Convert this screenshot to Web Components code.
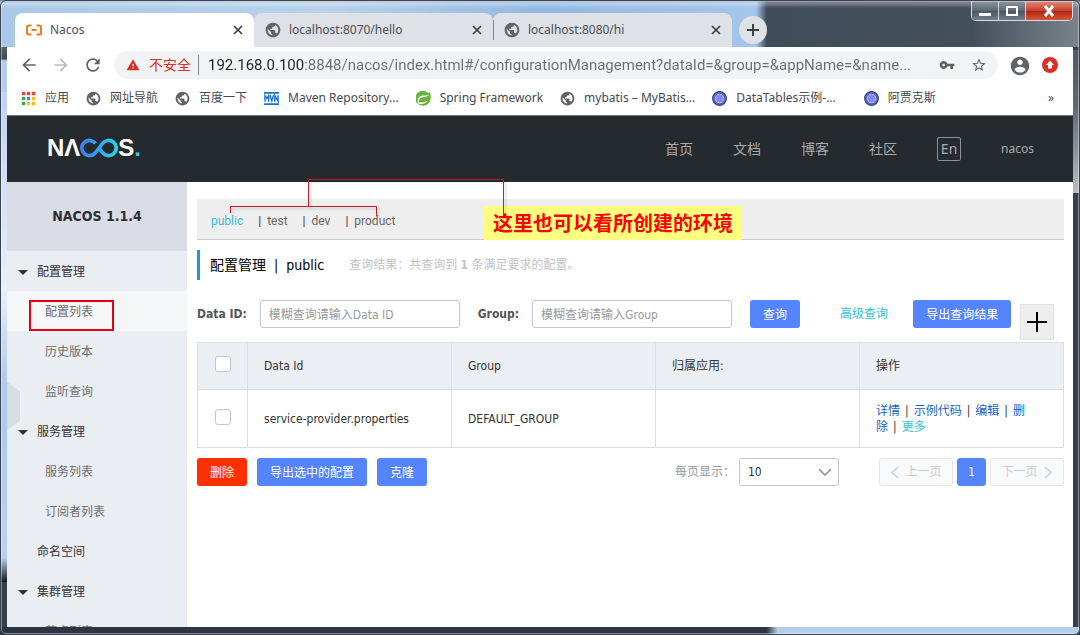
<!DOCTYPE html>
<html lang="zh-CN">
<head>
<meta charset="utf-8">
<title>Nacos</title>
<style>
  html, body { margin: 0; height: 100%; }
  body { font: 12px/16px "Noto Sans", "Noto Sans CJK SC", sans-serif; color: #333; background: #2e3744; overflow: hidden; }
</style>
</head>
<body>
<browser-window>
  <tab-strip slot="tabs">
    <browser-tab icon="alibaba" active>Nacos</browser-tab>
    <browser-tab icon="globe">localhost:8070/hello</browser-tab>
    <browser-tab icon="globe" divided>localhost:8080/hi</browser-tab>
  </tab-strip>
  <address-bar slot="toolbar"></address-bar>
  <bookmark-bar slot="bookmarks">
    <book-mark icon="apps">应用</book-mark>
    <book-mark icon="globe">网址导航</book-mark>
    <book-mark icon="globe">百度一下</book-mark>
    <book-mark icon="mvn">Maven Repository...</book-mark>
    <book-mark icon="spring">Spring Framework</book-mark>
    <book-mark icon="globe">mybatis – MyBatis...</book-mark>
    <book-mark icon="orb" wide>DataTables示例-...</book-mark>
    <book-mark icon="orb">阿贾克斯</book-mark>
  </bookmark-bar>
  <nacos-app></nacos-app>
</browser-window>

<script>
const define = (name, css, html) => {
  const template = document.createElement('template');
  template.innerHTML = `<style>*,:host{box-sizing:border-box}a{text-decoration:none;color:inherit}button,input,select{font:inherit;margin:0}${css}</style>`;
  customElements.define(name, class extends HTMLElement {
    constructor() {
      super();
      this.attachShadow({ mode: 'open' });
    }
    connectedCallback() {
      if (this.shadowRoot.childNodes.length) return;
      this.shadowRoot.append(template.content.cloneNode(true));
      const body = document.createElement('template');
      body.innerHTML = typeof html === 'function' ? html(this) : html;
      this.shadowRoot.append(body.content);
    }
  });
};

const material = d => `<svg viewBox="0 0 24 24"><path fill="currentColor" d="${d}"/></svg>`;
const dots = ['#ea4335', '#ea4335', '#ea4335', '#34a853', '#4285f4', '#fbbc05', '#34a853', '#fbbc05', '#fbbc05']
  .map((c, i) => `<rect x="${(i % 3) * 6 + 1}" y="${Math.floor(i / 3) * 6 + 1}" width="4" height="4" fill="${c}"/>`).join('');
const ICONS = {
  globe: material('M12 1C5.9 1 1 5.9 1 12s4.900 11 11 11 11-4.900 11-11S18.100 1 12 1zm-1 18.930c-3.950-.490-7-3.850-7-7.930 0-.620.080-1.210.210-1.790L9 15v1c0 1.100.900 2 2 2v1.930zm6.900-2.540c-.260-.810-1-1.390-1.900-1.390h-1v-3c0-.550-.450-1-1-1H8v-2h2c.550 0 1-.450 1-1V7h2c1.100 0 2-.900 2-2v-.410c2.930 1.190 5 4.060 5 7.410 0 2.080-.800 3.970-2.100 5.390z'),
  back: material('M20 11H7.83l5.59-5.59L12 4l-8 8 8 8 1.41-1.41L7.83 13H20v-2z'),
  forward: material('M12 4l-1.41 1.41L16.17 11H4v2h12.17l-5.58 5.590L12 20l8-8z'),
  reload: material('M17.65 6.35C16.2 4.9 14.21 4 12 4c-4.42 0-7.99 3.58-7.99 8s3.57 8 7.99 8c3.73 0 6.84-2.55 7.73-6h-2.08c-.82 2.33-3.04 4-5.65 4-3.31 0-6-2.69-6-6s2.69-6 6-6c1.66 0 3.14.69 4.22 1.78L13 11h7V4l-2.35 2.35z'),
  warning: material('M1 21h22L12 2 1 21zm12-3h-2v-2h2v2zm0-4h-2v-4h2v4z'),
  key: material('M12.65 10C11.83 7.67 9.61 6 7 6c-3.31 0-6 2.69-6 6s2.69 6 6 6c2.61 0 4.83-1.67 5.65-4H17v4h4v-4h2v-4H12.65zM7 14c-1.1 0-2-.9-2-2s.9-2 2-2 2 .9 2 2-.9 2-2 2z'),
  star: material('M22 9.24l-7.19-.62L12 2 9.19 8.63 2 9.24l5.46 4.73L5.82 21 12 17.27 18.18 21l-1.63-7.03L22 9.24zM12 15.4l-3.76 2.27 1-4.28-3.32-2.88 4.38-.38L12 6.1l1.71 4.04 4.38.38-3.32 2.88 1 4.28L12 15.4z'),
  account: material('M12 2C6.48 2 2 6.48 2 12s4.48 10 10 10 10-4.48 10-10S17.52 2 12 2zm0 3c1.66 0 3 1.34 3 3s-1.34 3-3 3-3-1.34-3-3 1.34-3 3-3zm0 14.2c-2.5 0-4.71-1.28-6-3.22.03-1.99 4-3.08 6-3.08 1.99 0 5.97 1.09 6 3.08-1.29 1.94-3.5 3.22-6 3.22z'),
  update: '<svg viewBox="0 0 16 16"><circle cx="8" cy="8" r="8" fill="#d93025"/><path fill="#fff" d="M8 3.500l4 4.500H10v3.500H6V8H4z"/></svg>',
  alibaba: '<svg viewBox="0 0 16 16"><path d="M5.500 3.500H2.800Q1 3.500 1 5.300v5.400q0 1.800 1.800 1.800h2.700M10.500 3.500h2.700q1.800 0 1.800 1.800v5.400q0 1.800-1.800 1.800h-2.700M5.500 8h5" fill="none" stroke="#f07c1f" stroke-width="2"/></svg>',
  apps: `<svg viewBox="0 0 18 18">${dots}</svg>`,
  mvn: '<svg viewBox="0 0 16 16"><path fill="#1b73d0" d="M0 1h16v2H0zM0 13h16v2H0z"/><path d="M1 11.500V5l2 3 2-3v6.500M6.500 4.500l1.800 6 1.800-6M11.500 11.500V5l3.500 6V4.500" fill="none" stroke="#1b73d0" stroke-width="1.500"/></svg>',
  spring: '<svg viewBox="0 0 16 16"><path fill="#68b33e" d="M14.500.7c1.700 4 1.900 8.800-.8 12A8 8 0 1 1 13 2.200q1-.7 1.500-1.500z"/><path fill="#fff" d="M14 3.500C12.700 6.500 9.500 6 6.500 6.800 3.500 7.700 2.600 9.600 3 12c4.600.6 7.800-.2 9.800-2.400-1.500 3.600-5 4.900-9.500 4.200l-.5.200C.8 10.500 2 6.400 5.500 5.200 8.800 4.200 12 5.500 14 3.500z"/></svg>',
  orb: '<svg viewBox="0 0 16 16"><circle cx="8" cy="8" r="7.300" fill="#5d66c6" stroke="#343a78" stroke-width="1.200"/><circle cx="8" cy="8" r="4.500" fill="#7f8aea" stroke="#b6bdf5"/></svg>',
  close: '<svg viewBox="0 0 10 10"><path d="M1 1l8 8M9 1L1 9" stroke="#3c4043" stroke-width="1.700"/></svg>',
  plus: '<svg viewBox="0 0 20 20"><path d="M10 0v20M0 10h20" stroke="currentColor" stroke-width="2"/></svg>',
  add: '<svg viewBox="0 0 12 12"><path d="M6 0v12M0 6h12" stroke="currentColor" stroke-width="2"/></svg>',
  down: '<svg viewBox="0 0 12 12"><path d="M0 3l6 6 6-6" fill="none" stroke="currentColor" stroke-width="1.300"/></svg>',
  left: '<svg viewBox="0 0 12 12"><path d="M9 0L2 6l7 6" fill="none" stroke="currentColor" stroke-width="1.400"/></svg>',
  right: '<svg viewBox="0 0 12 12"><path d="M3 0l7 6-7 6" fill="none" stroke="currentColor" stroke-width="1.400"/></svg>',
  caret: '<svg viewBox="0 0 10 10"><path d="M0 3h10L5 8z" fill="currentColor"/></svg>'
};
define('ui-icon', `:host{display:inline-flex;flex:none;width:16px;height:16px}svg{width:100%;height:100%}`, el => ICONS[el.getAttribute('name')]);

/* ---------- browser frame ---------- */
define('browser-window', `
  :host{display:flex;flex-direction:column;height:100vh;padding:0 7px 8px;border-radius:6px;position:relative;
    background:
      linear-gradient(#8fb3da,#b9d6f3 20%,#5d6773 50%,#3e4854 64%,#b3cdec 66%) left top/7px 92px no-repeat,
      linear-gradient(#bcd4f2,#e9effb 40%,#a9cbef 60%,#b5d3f5 95%,#15181c) left 92px/7px 490px no-repeat,
      linear-gradient(#4e5a66,#5f6974 40%,#b9bdc2) right 50px/7px 143px no-repeat,
      linear-gradient(90deg,#2d3542 71%,#b5cfea 72%) left bottom/100% 8px no-repeat,
      #36404c}
  :host::after{content:"";position:absolute;inset:0;border:1px solid #3a4150;border-radius:6px;box-shadow:inset 0 0 0 1px #ffffff66;pointer-events:none}
  .strip{margin:0 -7px;padding:13px 7px 0 15px;
    background:linear-gradient(#39415080 0,#ffffff55 3px,transparent 8px),
      linear-gradient(90deg,#a9c8e8,#b9d1ea 30%,#93b9e2 50%,#a5c6e9 70%,#3f4c59 71%,#43505c 90%,#7a838c)}
  .page{flex:1;min-height:0;display:flex;flex-direction:column;border-top:1px solid #73777b;background:#fff;overflow:hidden}
  ::slotted(nacos-app){flex:1;min-height:0}
  .win{position:absolute;top:1px;right:7px;display:flex;border:1px solid #d5dade;border-top:0;border-radius:0 0 5px 5px;overflow:hidden}
  .win button{width:27px;height:19px;border:0;border-right:1px solid #cfd4d8;padding:0;background:linear-gradient(#8e979f,#5d6770 50%,#4b555f 51%,#727c86);display:grid;place-items:center}
  .win button:last-child{width:46px;border:0;background:linear-gradient(#dd9181,#c7402a 50%,#b3230f 51%,#d0583a)}
  .win svg{width:14px;height:12px}
`, `
  <div class="strip"><slot name="tabs"></slot></div>
  <slot name="toolbar"></slot>
  <slot name="bookmarks"></slot>
  <div class="page"><slot></slot></div>
  <div class="win">
    <button aria-label="minimize"><svg viewBox="0 0 14 12"><path d="M1 8h12v3H1z" fill="#fff"/></svg></button>
    <button aria-label="maximize"><svg viewBox="0 0 14 12"><path d="M2 2h10v8H2z" fill="none" stroke="#fff" stroke-width="2"/></svg></button>
    <button aria-label="close"><svg viewBox="0 0 14 12"><path d="M3 1l8 10M11 1l-8 10" stroke="#fff" stroke-width="3"/></svg></button>
  </div>`);

define('tab-strip', `
  :host{display:flex;align-items:center;height:34px}
  ::slotted(browser-tab){width:239px}
  button{width:28px;height:28px;margin-left:7px;padding:0;border:0;border-radius:50%;background:#dee1e6;color:#3c4043;display:grid;place-items:center}
  ui-icon{width:12px;height:12px}
`, `<slot></slot><button aria-label="new tab"><ui-icon name="add"></ui-icon></button>`);

define('browser-tab', `
  :host{display:flex;align-items:center;gap:8px;height:34px;padding:0 11px;background:#dee1e6;color:#4b4f54;border-radius:8px 8px 0 0}
  :host([active]){background:#fff}
  :host([divided]){background:linear-gradient(#85898e,#85898e) left center/1px 20px no-repeat #dee1e6}
  span{flex:1;white-space:nowrap}
  button{border:0;background:none;padding:0;width:10px;height:10px;display:grid}
  ui-icon[name=globe]{color:#5f6368}
  ui-icon[name=close]{width:10px;height:10px}
`, el => `<ui-icon name="${el.getAttribute('icon')}"></ui-icon><span><slot></slot></span><button aria-label="close tab"><ui-icon name="close"></ui-icon></button>`);

define('address-bar', `
  :host{display:flex;align-items:center;gap:11px;height:36px;padding:0 13px 0 12px;background:#fff;color:#5f6368}
  button{border:0;background:none;padding:0;width:20px;height:20px;display:grid;place-items:center;color:inherit}
  button.off{color:#b9bcc0}
  .nav ui-icon{width:20px;height:20px}
  .nav{display:flex;gap:12px}
  .box{flex:1;min-width:0;display:flex;align-items:center;height:28px;border-radius:14px;background:#f1f3f4;padding:0 9px 0 12px}
  .warn{color:#d93025;width:14px;height:14px}
  label{margin:0 7px 0 9px;font-size:14px;line-height:20px;color:#d93025;white-space:nowrap}
  input{flex:1;min-width:0;height:20px;border:0;border-left:1px solid #80868b;padding:0 0 0 9px;font:15px/20px Roboto,sans-serif;outline:0;text-overflow:ellipsis;
    background:linear-gradient(90deg,#202124 105px,#6a6e73 105px);-webkit-background-clip:text;background-clip:text;-webkit-text-fill-color:transparent}
  .tail{display:flex;gap:12px;margin-left:4px}
  .acct ui-icon{width:22px;height:22px}
`, `
  <div class="nav">
    <button aria-label="back"><ui-icon name="back"></ui-icon></button>
    <button class="off" aria-label="forward"><ui-icon name="forward"></ui-icon></button>
    <button aria-label="reload"><ui-icon name="reload"></ui-icon></button>
  </div>
  <div class="box">
    <ui-icon class="warn" name="warning"></ui-icon>
    <label for="url">不安全</label>
    <input id="url" value="192.168.0.100:8848/nacos/index.html#/configurationManagement?dataId=&amp;group=&amp;appName=&amp;name...">
    <div class="tail">
      <button aria-label="passwords"><ui-icon name="key"></ui-icon></button>
      <button aria-label="bookmark"><ui-icon name="star"></ui-icon></button>
    </div>
  </div>
  <button class="acct" aria-label="account"><ui-icon name="account"></ui-icon></button>
  <button aria-label="update"><ui-icon name="update"></ui-icon></button>`);

define('bookmark-bar', `
  :host{display:flex;align-items:center;gap:17px;height:32px;padding:0 19px 2px 14px;background:#fff;color:#45494d}
  button{margin-left:auto;border:0;background:none;padding:0;color:inherit}
`, `<slot></slot><button aria-label="more bookmarks">»</button>`);
define('book-mark', `
  :host{display:block;white-space:nowrap}
  :host([wide]){margin-right:11px}
  a{display:flex;align-items:center;gap:9px}
  ui-icon{width:15px;height:15px;color:#5f6368}
`, el => `<a href="#"><ui-icon name="${el.getAttribute('icon')}"></ui-icon><slot></slot></a>`);

/* ---------- Nacos console ---------- */
define('nacos-app', `
  :host{display:flex;flex-direction:column;font-family:"DejaVu Sans Condensed","Noto Sans CJK SC",sans-serif}
  .body{flex:1;min-height:0;display:flex}
  side-menu{width:180px;flex:none}
  main{flex:1;min-width:0;padding:17px 9px 0 10px}
`, `
  <nacos-header></nacos-header>
  <div class="body"><side-menu></side-menu>
    <main>
      <env-bar></env-bar>
      <page-title></page-title>
      <search-form></search-form>
      <config-table></config-table>
      <table-footer></table-footer>
    </main>
  </div>`);

define('nacos-header', `
  :host{display:flex;align-items:center;justify-content:space-between;height:66px;flex:none;padding:0 39px 0 40px;background:#252a2f;color:#a9abad;font-family:"Noto Sans","Noto Sans CJK SC",sans-serif}
  .logo{display:flex;align-items:center;padding-bottom:3px;font:bold 24px/24px "Liberation Sans",sans-serif;color:#fff}
  .logo svg{width:38px;height:20px}
  .logo i{font-style:normal;color:#2fc6e8}
  nav{display:flex;align-items:center;gap:40px;font-size:14px}
  nav button{width:24px;height:24px;border:1px solid #8e9194;border-radius:2px;background:none;color:#a9abad;padding:0;font-size:14px;line-height:20px}
  .user{font-size:12px}
`, `
  <a class="logo" href="#" aria-label="NACOS">NΛ<svg viewBox="0 0 38 20"><defs><linearGradient id="g"><stop stop-color="#3f7df5"/><stop offset="1" stop-color="#27d3e6"/></linearGradient></defs><path d="M15.500 5.500A7.600 7.600 0 1 0 15.500 14.500L22.500 5.500A7.600 7.600 0 1 1 22.500 14.500L20 11.500" fill="none" stroke="url(#g)" stroke-width="3.600"/></svg>S<i>.</i></a>
  <nav><a href="#">首页</a><a href="#">文档</a><a href="#">博客</a><a href="#">社区</a><button>En</button><a class="user" href="#">nacos</a></nav>`);

define('side-menu', `
  :host{display:block;background:#eaedf1;position:relative;overflow:hidden}
  h1{margin:0;height:69px;background:#d9dce4;font-size:14px;line-height:69px;text-align:center;color:#2b2f33}
  .fold{position:absolute;left:0;top:200px;width:13px;height:48px;padding:0;border:0;background:#d9dce1;clip-path:polygon(0 0,100% 20%,100% 80%,0 100%)}
`, `
  <h1>NACOS 1.1.4</h1>
  <nav>
    <menu-item group caret>配置管理</menu-item>
    <menu-item current>配置列表</menu-item>
    <menu-item>历史版本</menu-item>
    <menu-item>监听查询</menu-item>
    <menu-item group caret>服务管理</menu-item>
    <menu-item>服务列表</menu-item>
    <menu-item>订阅者列表</menu-item>
    <menu-item group>命名空间</menu-item>
    <menu-item group caret>集群管理</menu-item>
    <menu-item>节点列表</menu-item>
  </nav>
  <button class="fold" aria-label="collapse"></button>`);
define('menu-item', `
  :host{display:block;position:relative;color:#6c6f73}
  :host([group]){color:#333}
  :host([current]){background:#f4f6f8}
  a{display:grid;grid-template-columns:10px 1fr;gap:17px;align-items:center;height:40px;padding:1px 0 0 11px}
  :host([group]) a{gap:9px}
  :host(:not([caret])) ui-icon{visibility:hidden}
  ui-icon{width:10px;height:10px}
  .mark{position:absolute;left:22px;top:9px;width:85px;height:31px;border:2px solid #e60012;pointer-events:none}
`, el => `<a href="#"><ui-icon name="caret"></ui-icon><span><slot></slot></span></a>${el.hasAttribute('current') ? '<div class="mark"></div>' : ''}`);

define('env-bar', `
  :host{display:block;position:relative;height:41px;background:#eee;border-bottom:1px solid #ccc;color:#666;font-family:Roboto,sans-serif}
  ul{display:flex;margin:0;padding:14px 14px 0;list-style:none;gap:15px}
  li{display:flex;gap:6px}
  li+li::before{content:"|";color:#333}
  .on{color:#33bfd8}
  svg{position:absolute;left:32px;top:-21px;width:280px;height:40px;filter:drop-shadow(2px 2px 1px #0003);z-index:1}
  p{position:absolute;left:287px;top:7px;margin:0;padding:0 9px;background:#ffff80;color:#f00;font:bold 20px/34px "Noto Sans CJK SC",sans-serif;white-space:nowrap}
`, `
  <ul><li><a class="on" href="#">public</a></li><li><a href="#">test</a></li><li><a href="#">dev</a></li><li><a href="#">product</a></li></ul>
  <p>这里也可以看所创建的环境</p>
  <svg viewBox="0 0 280 40"><path d="M1.500 35V28.500H147.500V38M79.500 28.500V1.500H274.500V38" fill="none" stroke="#c0202a"/></svg>`);

define('page-title', `
  :host{display:flex;align-items:center;height:30px;margin-top:10px;border-left:3px solid #209bc7;padding-left:10px}
  h2{margin:0 25px 0 0;font-weight:400;font-size:14px;line-height:20px;color:#000;white-space:pre}
  p{margin:0;color:#c3c3c3}
`, `<h2>配置管理  |  public</h2><p>查询结果：共查询到 <b>1</b> 条满足要求的配置。</p>`);

define('ui-button', `
  :host{display:block}
  button{height:28px;padding:2px 13px 0;border:0;border-radius:3px;background:#5584ff;color:#fff;white-space:nowrap;display:block}
  :host([danger]) button{background:#ff3000}
`, `<button><slot></slot></button>`);

define('text-field', `
  :host{display:flex;align-items:center;gap:13px}
  label{font-weight:700;color:#555;white-space:nowrap}
  input{width:200px;min-width:0;height:28px;border:1px solid #c4c6cf;border-radius:3px;padding:2px 8px 0;background:#fff}
  input::placeholder{color:#999}
`, el => `<label for="f">${el.getAttribute('label')}</label><input id="f" placeholder="${el.getAttribute('hint')}">`);

define('search-form', `
  :host{display:flex;align-items:flex-start;height:42px;margin-top:20px}
  text-field{margin-right:18px}
  .adv{margin:0 25px 0 40px;line-height:28px;color:#33bfd8}
  .add{width:34px;height:36px;margin:4px 0 0 9px;padding:0;border:1px solid #e2e2e2;background:#eee;color:#000;display:grid;place-items:center}
  .add ui-icon{width:20px;height:20px}
`, `
  <text-field label="Data ID:" hint="模糊查询请输入Data ID"></text-field>
  <text-field label="Group:" hint="模糊查询请输入Group"></text-field>
  <ui-button>查询</ui-button>
  <a class="adv" href="#">高级查询</a>
  <ui-button>导出查询结果</ui-button>
  <button class="add" aria-label="新建配置"><ui-icon name="plus"></ui-icon></button>`);

define('config-table', `
  :host{display:block}
  table{width:100%;border-collapse:collapse;table-layout:fixed;color:#333}
  th,td{border:1px solid #dcdee3;padding:0 16px;text-align:left;font-weight:400}
  th{height:47px;background:#ebeef2}
  td{height:58px}
  .c{width:50px;text-align:center;padding:0 0 4px}
  input{appearance:none;margin:0;width:16px;height:16px;border:1px solid #c4c6cf;border-radius:3px;background:#fff;vertical-align:middle}
  .ops{padding-right:28px}
  .ops a{color:#1a5fc8}
  .ops span{margin:0 5px}
  .ops .more{color:#33bfd8}
`, `
  <table>
    <thead><tr><th class="c"><input type="checkbox" aria-label="全选"></th><th>Data Id</th><th>Group</th><th>归属应用:</th><th>操作</th></tr></thead>
    <tbody><tr><td class="c"><input type="checkbox" aria-label="选择"></td><td>service-provider.properties</td><td>DEFAULT_GROUP</td><td></td>
      <td class="ops"><a href="#">详情</a><span>|</span><a href="#">示例代码</a><span>|</span><a href="#">编辑</a><span>|</span><a href="#">删<wbr>除</a><span>|</span><a class="more" href="#">更多</a></td></tr></tbody>
  </table>`);

define('table-footer', `
  :host{display:flex;align-items:center;gap:10px;margin-top:10px;white-space:nowrap}
  .size{display:flex;align-items:center;gap:4px;margin:0 30px 0 auto;color:#999}
  .sel{display:grid;align-items:center;width:100px}
  select{grid-area:1/1;appearance:none;height:28px;border:1px solid #c4c6cf;border-radius:3px;background:#fff;color:#333;padding:0 8px}
  .sel ui-icon{grid-area:1/1;justify-self:end;margin-right:8px;width:12px;height:12px;color:#888;pointer-events:none}
  .pager{display:flex;gap:4px}
  .pager button{display:flex;align-items:center;justify-content:center;gap:4px;height:28px;width:74px;padding:0;border:1px solid #e6e7eb;border-radius:3px;background:#f9fafb;color:#ccc}
  .pager button.on{width:29px;background:#5584ff;border-color:#5584ff;color:#fff}
  .pager ui-icon{width:11px;height:11px}
`, `
  <ui-button danger>删除</ui-button><ui-button>导出选中的配置</ui-button><ui-button>克隆</ui-button>
  <div class="size"><label for="size">每页显示：</label>
    <div class="sel"><select id="size"><option>10</option><option>20</option></select><ui-icon name="down"></ui-icon></div></div>
  <div class="pager">
    <button disabled><ui-icon name="left"></ui-icon>上一页</button>
    <button class="on">1</button>
    <button disabled>下一页<ui-icon name="right"></ui-icon></button>
  </div>`);
</script>
</body>
</html>
